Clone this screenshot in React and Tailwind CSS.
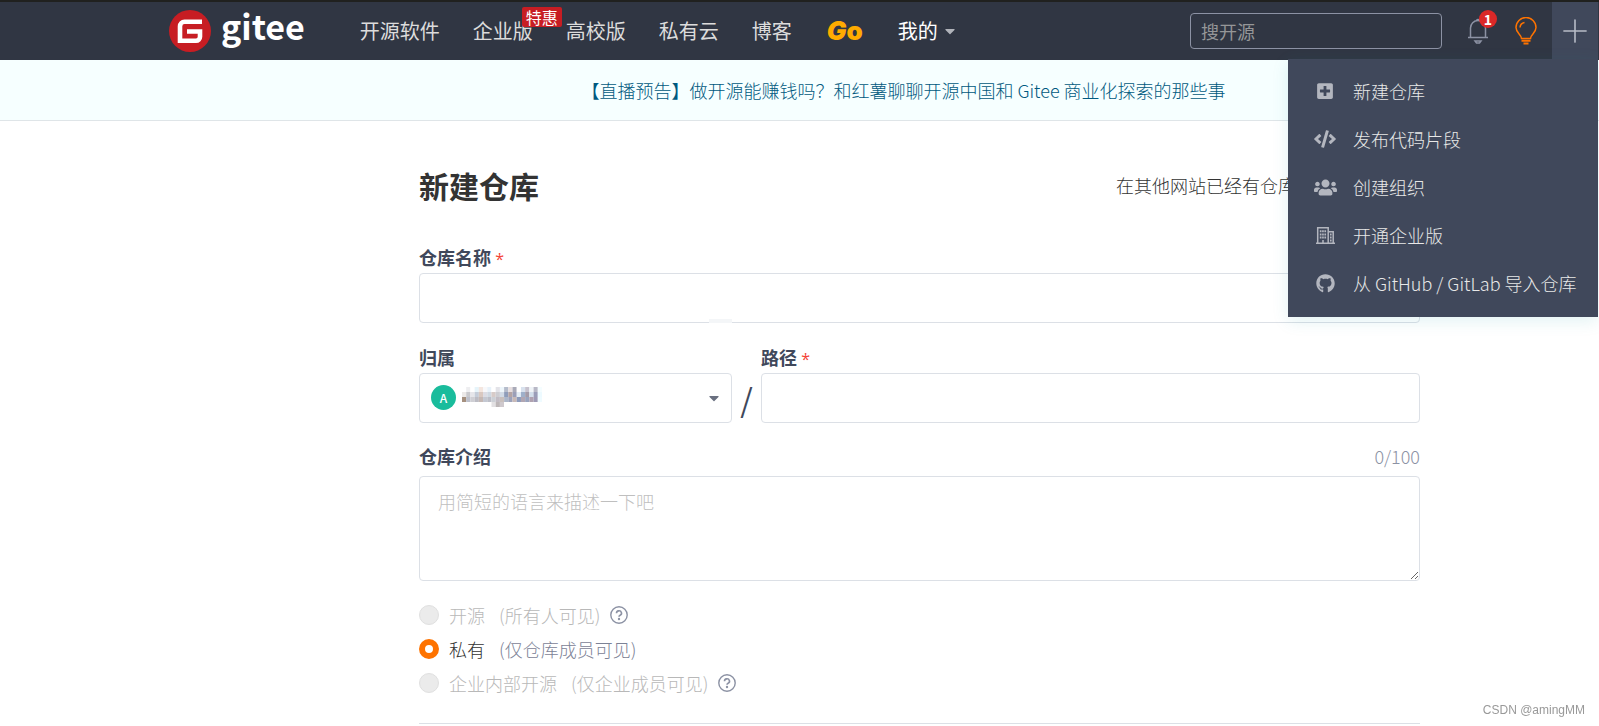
import { useState } from "react";
import { FaPlusSquare, FaCode, FaUsers, FaGithub, FaCaretDown } from "react-icons/fa";
import { Plus } from "lucide-react";

const GiteeLogo = () => (
  <a href="#home" aria-label="gitee" className="flex items-center gap-[10px] text-white">
    <svg viewBox="0 0 42 42" className="size-[42px]">
      <circle cx="21" cy="21" r="21" fill="#c71d23" />
      <path
        fill="none"
        stroke="#fff"
        strokeWidth="4.6"
        d="M33 11.800H15.500a4.500 4.500 0 0 0-4.500 4.500V30.700H27a4 4 0 0 0 4-4V21.500H18"
      />
    </svg>
    <span className="mb-[10px] text-[34px] leading-[44px] font-bold">gitee</span>
  </a>
);

const BellIcon = () => (
  <svg viewBox="0 0 22 26" fill="none" stroke="#8c92a4" strokeWidth="1.5" className="h-[26px] w-[22px]">
    <path d="M1 19.500h20M3.500 19V10a7.500 7.500 0 0 1 15 0v9M9.500 2.500a1.700 1.700 0 0 1 3 0" />
    <path d="M8 23h6l-1.500 2h-3z" />
  </svg>
);

const BulbIcon = () => (
  <svg viewBox="0 0 22 28" fill="none" stroke="#fe7300" strokeWidth="1.5" className="h-[28px] w-[22px]">
    <path d="M6.500 21.500c0-4-5.500-5.500-5.500-11a10 10 0 0 1 20 0c0 5.500-5.500 7-5.500 11z" />
    <path d="M5 10.500a5.500 5.500 0 0 1 4.500-5" />
    <path d="M6.500 23.800h9M8.500 26.400h5" strokeWidth="2" />
  </svg>
);

const BuildingIcon = () => (
  <svg viewBox="0 0 19 17" className="h-[17px] w-[19px]" fill="none" stroke="currentColor" strokeWidth="1.500">
    <path d="M0 16.200h19M1.700 16V.8h10.500V16M12.200 4.800h5V16" />
    <path d="M3.800 4.200h6.400M3.800 7.400h6.400M3.800 10.600h6.400" strokeWidth="2" strokeDasharray="1.700 .6" />
    <path d="M14 7.500h1.600M14 10.500h1.600M14 13.500h1.600" strokeWidth="1.800" />
    <path d="M7 16v-3" />
  </svg>
);

const HelpIcon = () => (
  <svg viewBox="0 0 18 18" fill="none" stroke="#8c92a4" strokeWidth="1.400" className="size-[18px]">
    <circle cx="9" cy="9" r="8.200" />
    <path d="M6.500 7.200a2.500 2.300 0 1 1 3.600 2c-.8.400-1.100.7-1.100 1.600" strokeWidth="1.600" />
    <circle cx="9" cy="13" r=".5" />
  </svg>
);

// Owner name is masked with a mosaic, one colour per 4px cell
const mosaicRows = [
  ["#fff", "#eeeef0", "#fff", "#e6f4fa", "#f4e6df", "#f8f8fa", "#e8f2fa", "#fff", "#e3e3e8", "#eef6fb", "#b5bccb", "#e8dfe0", "#a9aab8", "#fff", "#d9e2ee", "#c7c2ce", "#f0f4f8", "#b8b8c6", "#f5fdff"],
  ["#ece9e8", "#c9c9cd", "#e6e6ea", "#c5cdd9", "#d9c8c0", "#dcdce4", "#cfd8e2", "#d7cbc8", "#cdcdd2", "#d2dbe6", "#8f9dba", "#b4a4a4", "#9b9fb8", "#e4edf5", "#9fb0ca", "#a39ba8", "#d3dfeb", "#9a9db8", "#edfaff"],
  ["#a5907f", "#bdc0cb", "#cfcfd4", "#bcbcc4", "#c5b8b4", "#c4c8d2", "#bcbec8", "#ccd0d6", "#c2bcc4", "#c9c0bd", "#adb7c9", "#9da3bb", "#c8b9b7", "#8d9bbb", "#b1a6b2", "#99a3bd", "#b0a2b0", "#9e9ab5", "#effbff"],
  ["#fff", "#fff", "#fff", "#fff", "#fff", "#fff", "#fff", "#e2e0e2", "#bdb7b8", "#cfc9cd", "#fff", "#fff", "#fff", "#fff", "#fff", "#fff", "#fff", "#fff", "#fff"],
];

const NameMosaic = () => (
  <svg viewBox="0 0 76 16" className="pointer-events-none absolute top-[14px] left-[43px] h-5 w-20" preserveAspectRatio="none">
    {mosaicRows.map((row, y) =>
      row.map((color, x) => (
        <rect key={`${x}-${y}`} x={x * 4} y={y * 4} width="4" height="4" fill={color} />
      ))
    )}
  </svg>
);

const menuItems = [
  { label: "新建仓库", icon: <FaPlusSquare size={18} /> },
  { label: "发布代码片段", icon: <FaCode size={22} /> },
  { label: "创建组织", icon: <FaUsers size={23} /> },
  { label: "开通企业版", icon: <BuildingIcon /> },
  { label: "从 GitHub / GitLab 导入仓库", icon: <FaGithub size={19} /> },
];

const visibilityOptions = [
  { value: "public", label: "开源", hint: "(所有人可见)", disabled: true, help: true },
  { value: "private", label: "私有", hint: "(仅仓库成员可见)" },
  { value: "internal", label: "企业内部开源", hint: "(仅企业成员可见)", disabled: true, help: true },
];

const Header = () => (
  <header className="relative flex h-[60px] items-center border-t-2 border-[#20211f] bg-[#303643] pr-px pl-[169px] text-xl text-[#dcdcdc]">
    <GiteeLogo />
    <nav className="ml-[55px] flex items-center gap-[33px] whitespace-nowrap">
      <a href="#explore">开源软件</a>
      <a href="#enterprise" className="relative">
        企业版
        <span className="absolute -top-2.5 left-[49px] rounded-xs bg-[#c71d23] px-1 text-base leading-5 text-white">
          特惠
        </span>
      </a>
      <a href="#education">高校版</a>
      <a href="#cloud">私有云</a>
      <a href="#blog">博客</a>
      <a href="#go" className="w-10 text-center font-['Inter'] text-[26px] leading-7 font-black text-[#ffab00]">
        <span className="italic">G</span>o
      </a>
      <a href="#mine" className="flex items-center gap-1 text-white">
        我的
        <FaCaretDown size={16} className="text-[#b0b3ba]" />
      </a>
    </nav>
    <input
      type="search"
      aria-label="搜开源"
      placeholder="搜开源"
      className="ml-auto h-9 w-[252px] rounded-sm border border-[#8c92a4] px-[10px] text-lg placeholder:text-[#959698]"
    />
    <button type="button" aria-label="通知" className="relative ml-[25px]">
      <BellIcon />
      <span className="absolute -top-2 left-3 size-[18px] rounded-full bg-[#db2828] text-center text-sm leading-[18px] font-bold text-white">
        1
      </span>
    </button>
    <button type="button" aria-label="提示" className="ml-[26px]">
      <BulbIcon />
    </button>
    <button type="button" aria-label="新建" aria-expanded="true" className="ml-[15px] flex h-full w-[46px] items-center justify-center bg-[#40485b]">
      <Plus size={38} strokeWidth={1} className="text-[#b8bcc8]" />
    </button>
    <ul className="absolute top-[57px] right-px z-10 w-[310px] bg-[#40485b] pt-2 pb-[10px] text-lg font-light text-[#e8e8e8] shadow-[0_4px_16px_rgba(0,150,160,0.12)]">
      {menuItems.map((item) => (
        <li key={item.label}>
          <a href="#new" className="flex h-12 items-center pl-[25px] whitespace-nowrap">
            <span className="mr-4 flex w-6 justify-center text-[#b3b6bf]">{item.icon}</span>
            {item.label}
          </a>
        </li>
      ))}
    </ul>
  </header>
);

const Required = () => (
  <span className="font-['Open_Sans'] text-base leading-none font-normal text-[#f44336]"> *</span>
);

const App = () => {
  const [description, setDescription] = useState("");
  const [visibility, setVisibility] = useState("private");

  return (
    <div className="min-h-screen bg-white font-['Noto_Sans_CJK_SC',sans-serif] text-lg text-[#40485b]">
      <Header />
      <div className="border-b border-[#dfe5e8] bg-[#f6ffff] pl-52 text-center leading-[60px] font-light">
        <a href="#live" className="text-[#005980]">
          【直播预告】做开源能赚钱吗？和红薯聊聊开源中国和 Gitee 商业化探索的那些事
        </a>
      </div>

      <main className="mx-auto max-w-[1241px] pt-[46px] pl-[240px]">
        <div className="mb-[42px] flex items-center justify-between">
          <h1 className="text-3xl font-bold text-[#333]">新建仓库</h1>
          <p className="mr-[124px] font-light whitespace-nowrap text-[#333]">在其他网站已经有仓库</p>
        </div>

        <form className="leading-6">
          <label htmlFor="name" className="mb-1 block font-bold">
            仓库名称
            <Required />
          </label>
          <div className="relative">
            <input id="name" className="block h-[50px] w-full rounded border border-[#dce0e6] px-4" />
            <span className="absolute bottom-0 left-[290px] h-1 w-[23px] bg-[#f4f6f8]" />
          </div>

          <div className="mt-[22px] grid grid-cols-[313px_29px_1fr]">
            <div>
              <label htmlFor="owner" className="mb-1 block font-bold">
                归属
              </label>
              <div className="relative">
                <select id="owner" className="block h-[50px] w-full appearance-none rounded border border-[#dce0e6] pl-[42px] text-transparent">
                  <option>AmingMM</option>
                </select>
                <span className="pointer-events-none absolute top-3 left-3 size-[25px] rounded-full bg-[#1abc9c] text-center text-xs leading-[25px] font-medium text-white">
                  A
                </span>
                <NameMosaic />
                <FaCaretDown size={16} className="pointer-events-none absolute top-[17px] right-[10px] text-[#6a7080]" />
              </div>
            </div>
            <span className="self-end text-center text-[32px] leading-[50px]">/</span>
            <div>
              <label htmlFor="path" className="mb-1 block font-bold">
                路径
                <Required />
              </label>
              <input id="path" className="block h-[50px] w-full rounded border border-[#dce0e6] px-4" />
            </div>
          </div>

          <div className="mt-[21px] mb-2 flex justify-between">
            <label htmlFor="description" className="font-bold">
              仓库介绍
            </label>
            <span className="font-light text-[#8c92a4]">{description.length}/100</span>
          </div>
          <textarea
            id="description"
            maxLength={100}
            value={description}
            onChange={(e) => setDescription(e.target.value)}
            placeholder="用简短的语言来描述一下吧"
            className="block h-[105px] w-full rounded border border-[#dce0e6] px-[18px] py-3 font-light placeholder:text-[#bfbfbf]"
          />

          <fieldset className="mt-[22px] flex flex-col gap-[10px] font-light">
            {visibilityOptions.map((option) => (
              <div key={option.value} className="flex items-center">
                <label className={`flex items-center ${option.disabled ? "text-[#b8b8b8]" : "text-[#333]"}`}>
                  <input
                    type="radio"
                    name="visibility"
                    disabled={option.disabled}
                    checked={visibility === option.value}
                    onChange={() => setVisibility(option.value)}
                    className="mr-[10px] size-5 appearance-none rounded-full border border-[#e0e0e0] bg-[#ebebeb] checked:border-[6px] checked:border-[#fe7300] checked:bg-white"
                  />
                  {option.label}
                  <span className={`ml-[14px] ${option.disabled ? "" : "text-[#7c8296]"}`}>{option.hint}</span>
                </label>
                {option.help && (
                  <button type="button" aria-label="说明" className="ml-[10px]">
                    <HelpIcon />
                  </button>
                )}
              </div>
            ))}
          </fieldset>
          <hr className="mt-7 border-[#dce0e6]" />
        </form>
      </main>
      <span className="fixed right-[14px] bottom-2 font-['Liberation_Sans'] text-xs text-[#999]">CSDN @amingMM</span>
    </div>
  );
};

export default App;
